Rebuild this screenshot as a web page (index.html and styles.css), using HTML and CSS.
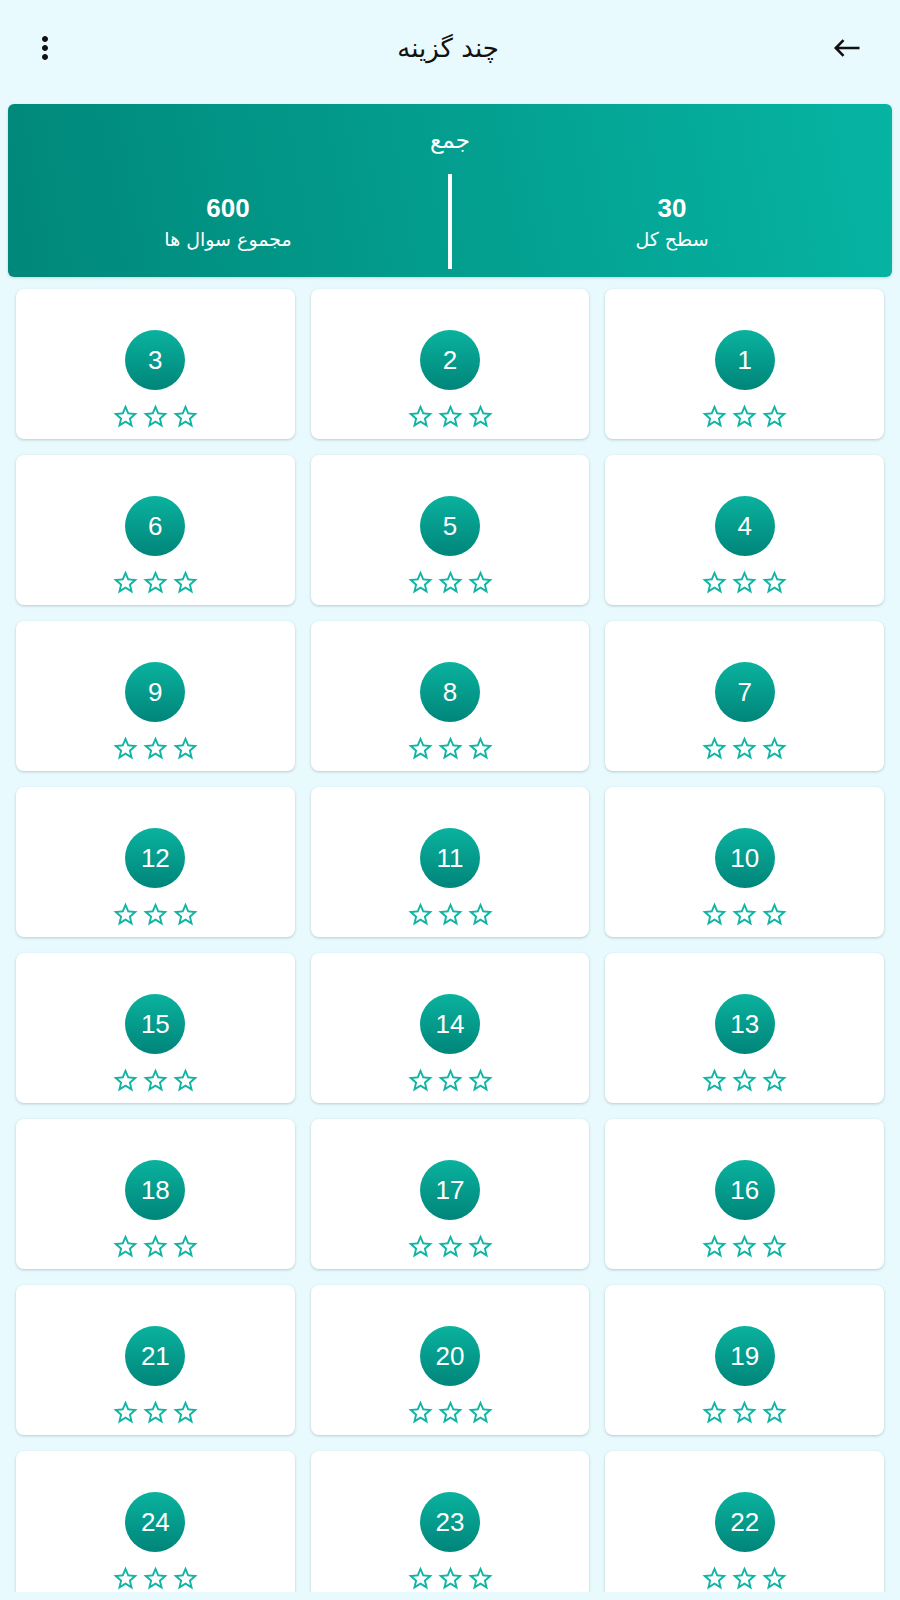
FILE: index.html
```html
<!DOCTYPE html>
<html lang="fa" dir="rtl">
<head>
    <meta charset="UTF-8"/>
    <meta name="viewport" content="width=device-width, initial-scale=1"/>
    <title>چند گزینه</title>
    <link rel="stylesheet" href="styles.css">
</head>
<body>

<svg class="sprites" xmlns="http://www.w3.org/2000/svg" aria-hidden="true">
    <symbol id="star-border" viewBox="0 0 24 24">
        <path d="M22 9.24l-7.19-.62L12 2 9.19 8.63 2 9.24l5.46 4.73L5.82 21 12 17.27 18.18 21l-1.63-7.03L22 9.24zM12 15.4l-3.76 2.27 1-4.28-3.32-2.88 4.38-.38L12 6.1l1.71 4.04 4.38.38-3.32 2.88 1 4.28L12 15.4z"/>
    </symbol>
</svg>

<!-- App bar -->
<header class="app-bar">
    <button class="icon-btn back-btn" aria-label="بازگشت">
        <svg viewBox="0 0 28 28"><path d="M26.5 14H3M10.5 6.2L2.8 14l7.7 7.8"/></svg>
    </button>
    <h1 class="app-title">چند گزینه</h1>
    <button class="icon-btn" aria-label="منو">
        <svg viewBox="0 0 24 24"><path d="M12 8c1.1 0 2-.9 2-2s-.9-2-2-2-2 .9-2 2 .9 2 2 2zm0 2c-1.1 0-2 .9-2 2s.9 2 2 2 2-.9 2-2-.9-2-2-2zm0 6c-1.1 0-2 .9-2 2s.9 2 2 2 2-.9 2-2-.9-2-2-2z"/></svg>
    </button>
</header>

<!-- Summary banner -->
<section class="summary">
    <div class="summary-title">جمع</div>
    <div class="summary-row">
        <div class="stat">
            <div class="stat-value">30</div>
            <div class="stat-label">سطح کل</div>
        </div>
        <div class="stat-divider"></div>
        <div class="stat">
            <div class="stat-value">600</div>
            <div class="stat-label">مجموع سوال ها</div>
        </div>
    </div>
</section>

<!-- Levels -->
<main class="levels">
    <div class="level"><span class="level-num">1</span><div class="stars"><svg><use href="#star-border"/></svg><svg><use href="#star-border"/></svg><svg><use href="#star-border"/></svg></div></div>
    <div class="level"><span class="level-num">2</span><div class="stars"><svg><use href="#star-border"/></svg><svg><use href="#star-border"/></svg><svg><use href="#star-border"/></svg></div></div>
    <div class="level"><span class="level-num">3</span><div class="stars"><svg><use href="#star-border"/></svg><svg><use href="#star-border"/></svg><svg><use href="#star-border"/></svg></div></div>
    <div class="level"><span class="level-num">4</span><div class="stars"><svg><use href="#star-border"/></svg><svg><use href="#star-border"/></svg><svg><use href="#star-border"/></svg></div></div>
    <div class="level"><span class="level-num">5</span><div class="stars"><svg><use href="#star-border"/></svg><svg><use href="#star-border"/></svg><svg><use href="#star-border"/></svg></div></div>
    <div class="level"><span class="level-num">6</span><div class="stars"><svg><use href="#star-border"/></svg><svg><use href="#star-border"/></svg><svg><use href="#star-border"/></svg></div></div>
    <div class="level"><span class="level-num">7</span><div class="stars"><svg><use href="#star-border"/></svg><svg><use href="#star-border"/></svg><svg><use href="#star-border"/></svg></div></div>
    <div class="level"><span class="level-num">8</span><div class="stars"><svg><use href="#star-border"/></svg><svg><use href="#star-border"/></svg><svg><use href="#star-border"/></svg></div></div>
    <div class="level"><span class="level-num">9</span><div class="stars"><svg><use href="#star-border"/></svg><svg><use href="#star-border"/></svg><svg><use href="#star-border"/></svg></div></div>
    <div class="level"><span class="level-num">10</span><div class="stars"><svg><use href="#star-border"/></svg><svg><use href="#star-border"/></svg><svg><use href="#star-border"/></svg></div></div>
    <div class="level"><span class="level-num">11</span><div class="stars"><svg><use href="#star-border"/></svg><svg><use href="#star-border"/></svg><svg><use href="#star-border"/></svg></div></div>
    <div class="level"><span class="level-num">12</span><div class="stars"><svg><use href="#star-border"/></svg><svg><use href="#star-border"/></svg><svg><use href="#star-border"/></svg></div></div>
    <div class="level"><span class="level-num">13</span><div class="stars"><svg><use href="#star-border"/></svg><svg><use href="#star-border"/></svg><svg><use href="#star-border"/></svg></div></div>
    <div class="level"><span class="level-num">14</span><div class="stars"><svg><use href="#star-border"/></svg><svg><use href="#star-border"/></svg><svg><use href="#star-border"/></svg></div></div>
    <div class="level"><span class="level-num">15</span><div class="stars"><svg><use href="#star-border"/></svg><svg><use href="#star-border"/></svg><svg><use href="#star-border"/></svg></div></div>
    <div class="level"><span class="level-num">16</span><div class="stars"><svg><use href="#star-border"/></svg><svg><use href="#star-border"/></svg><svg><use href="#star-border"/></svg></div></div>
    <div class="level"><span class="level-num">17</span><div class="stars"><svg><use href="#star-border"/></svg><svg><use href="#star-border"/></svg><svg><use href="#star-border"/></svg></div></div>
    <div class="level"><span class="level-num">18</span><div class="stars"><svg><use href="#star-border"/></svg><svg><use href="#star-border"/></svg><svg><use href="#star-border"/></svg></div></div>
    <div class="level"><span class="level-num">19</span><div class="stars"><svg><use href="#star-border"/></svg><svg><use href="#star-border"/></svg><svg><use href="#star-border"/></svg></div></div>
    <div class="level"><span class="level-num">20</span><div class="stars"><svg><use href="#star-border"/></svg><svg><use href="#star-border"/></svg><svg><use href="#star-border"/></svg></div></div>
    <div class="level"><span class="level-num">21</span><div class="stars"><svg><use href="#star-border"/></svg><svg><use href="#star-border"/></svg><svg><use href="#star-border"/></svg></div></div>
    <div class="level"><span class="level-num">22</span><div class="stars"><svg><use href="#star-border"/></svg><svg><use href="#star-border"/></svg><svg><use href="#star-border"/></svg></div></div>
    <div class="level"><span class="level-num">23</span><div class="stars"><svg><use href="#star-border"/></svg><svg><use href="#star-border"/></svg><svg><use href="#star-border"/></svg></div></div>
    <div class="level"><span class="level-num">24</span><div class="stars"><svg><use href="#star-border"/></svg><svg><use href="#star-border"/></svg><svg><use href="#star-border"/></svg></div></div>
</main>

</body>
</html>
```

FILE: styles.css
```css
html, body {
  margin: 0;
  height: 100%;
}
body {
  font-family: "DejaVu Sans", "Noto Sans", sans-serif;
  background-color: #e8fafd;
  color: #111;
  display: flex;
  flex-direction: column;
  overflow: hidden;
}
.sprites {
  display: none;
}

/* App bar */
.app-bar {
  height: 96px;
  flex: none;
  display: flex;
  align-items: center;
  justify-content: space-between;
  padding: 0 39px 0 27px;
}
.icon-btn {
  width: 36px;
  height: 36px;
  padding: 0;
  border: 0;
  background: none;
  color: #111;
}
.icon-btn svg {
  width: 36px;
  height: 36px;
  fill: currentColor;
  display: block;
}
.back-btn {
  width: 28px;
  height: 28px;
}
.back-btn svg {
  width: 28px;
  height: 28px;
  fill: none;
  stroke: currentColor;
  stroke-width: 2.6;
}
.app-title {
  margin: 0;
  font-size: 26px;
  font-weight: normal;
}

/* Summary banner */
.summary {
  flex: none;
  margin: 8px 8px 0;
  height: 173px;
  box-sizing: border-box;
  padding: 20px 0 8px;
  border-radius: 6px;
  background: linear-gradient(260deg, #06b4a3, #00887a);
  box-shadow: 0 1px 3px rgba(0, 0, 0, 0.15);
  color: #fff;
  display: flex;
  flex-direction: column;
}
.summary-title {
  text-align: center;
  font-size: 23px;
  line-height: 32px;
}
.summary-row {
  flex: 1;
  margin-top: 18px;
  display: flex;
}
.stat {
  flex: 1;
  display: flex;
  flex-direction: column;
  justify-content: center;
  align-items: center;
  padding-top: 4px;
}
.stat-value {
  font-family: "Liberation Sans", Arial, sans-serif;
  font-weight: bold;
  font-size: 26px;
  line-height: 30px;
}
.stat-label {
  font-size: 19px;
  line-height: 32px;
}
.stat-divider {
  width: 4px;
  background: #fff;
}

/* Level grid */
.levels {
  flex: 1;
  min-height: 0;
  overflow: hidden;
  margin-bottom: 8px;
  padding: 12px 16px 0;
  display: grid;
  grid-template-columns: repeat(3, 1fr);
  grid-auto-rows: 150px;
  gap: 16px;
  align-content: start;
}
.level {
  background: #fff;
  border-radius: 8px;
  box-shadow: 0 1px 3px rgba(0, 40, 50, 0.22);
  display: flex;
  flex-direction: column;
  align-items: center;
  padding-top: 41px;
  box-sizing: border-box;
}
.level-num {
  width: 60px;
  height: 60px;
  border-radius: 50%;
  background: linear-gradient(180deg, #0ab29e, #00857a);
  color: #fff;
  font-family: "Liberation Sans", Arial, sans-serif;
  font-size: 26px;
  display: flex;
  align-items: center;
  justify-content: center;
}
.stars {
  margin-top: 12px;
  display: flex;
  gap: 1px;
  direction: ltr;
}
.stars svg {
  width: 29px;
  height: 29px;
  fill: #12b4a3;
}
```
